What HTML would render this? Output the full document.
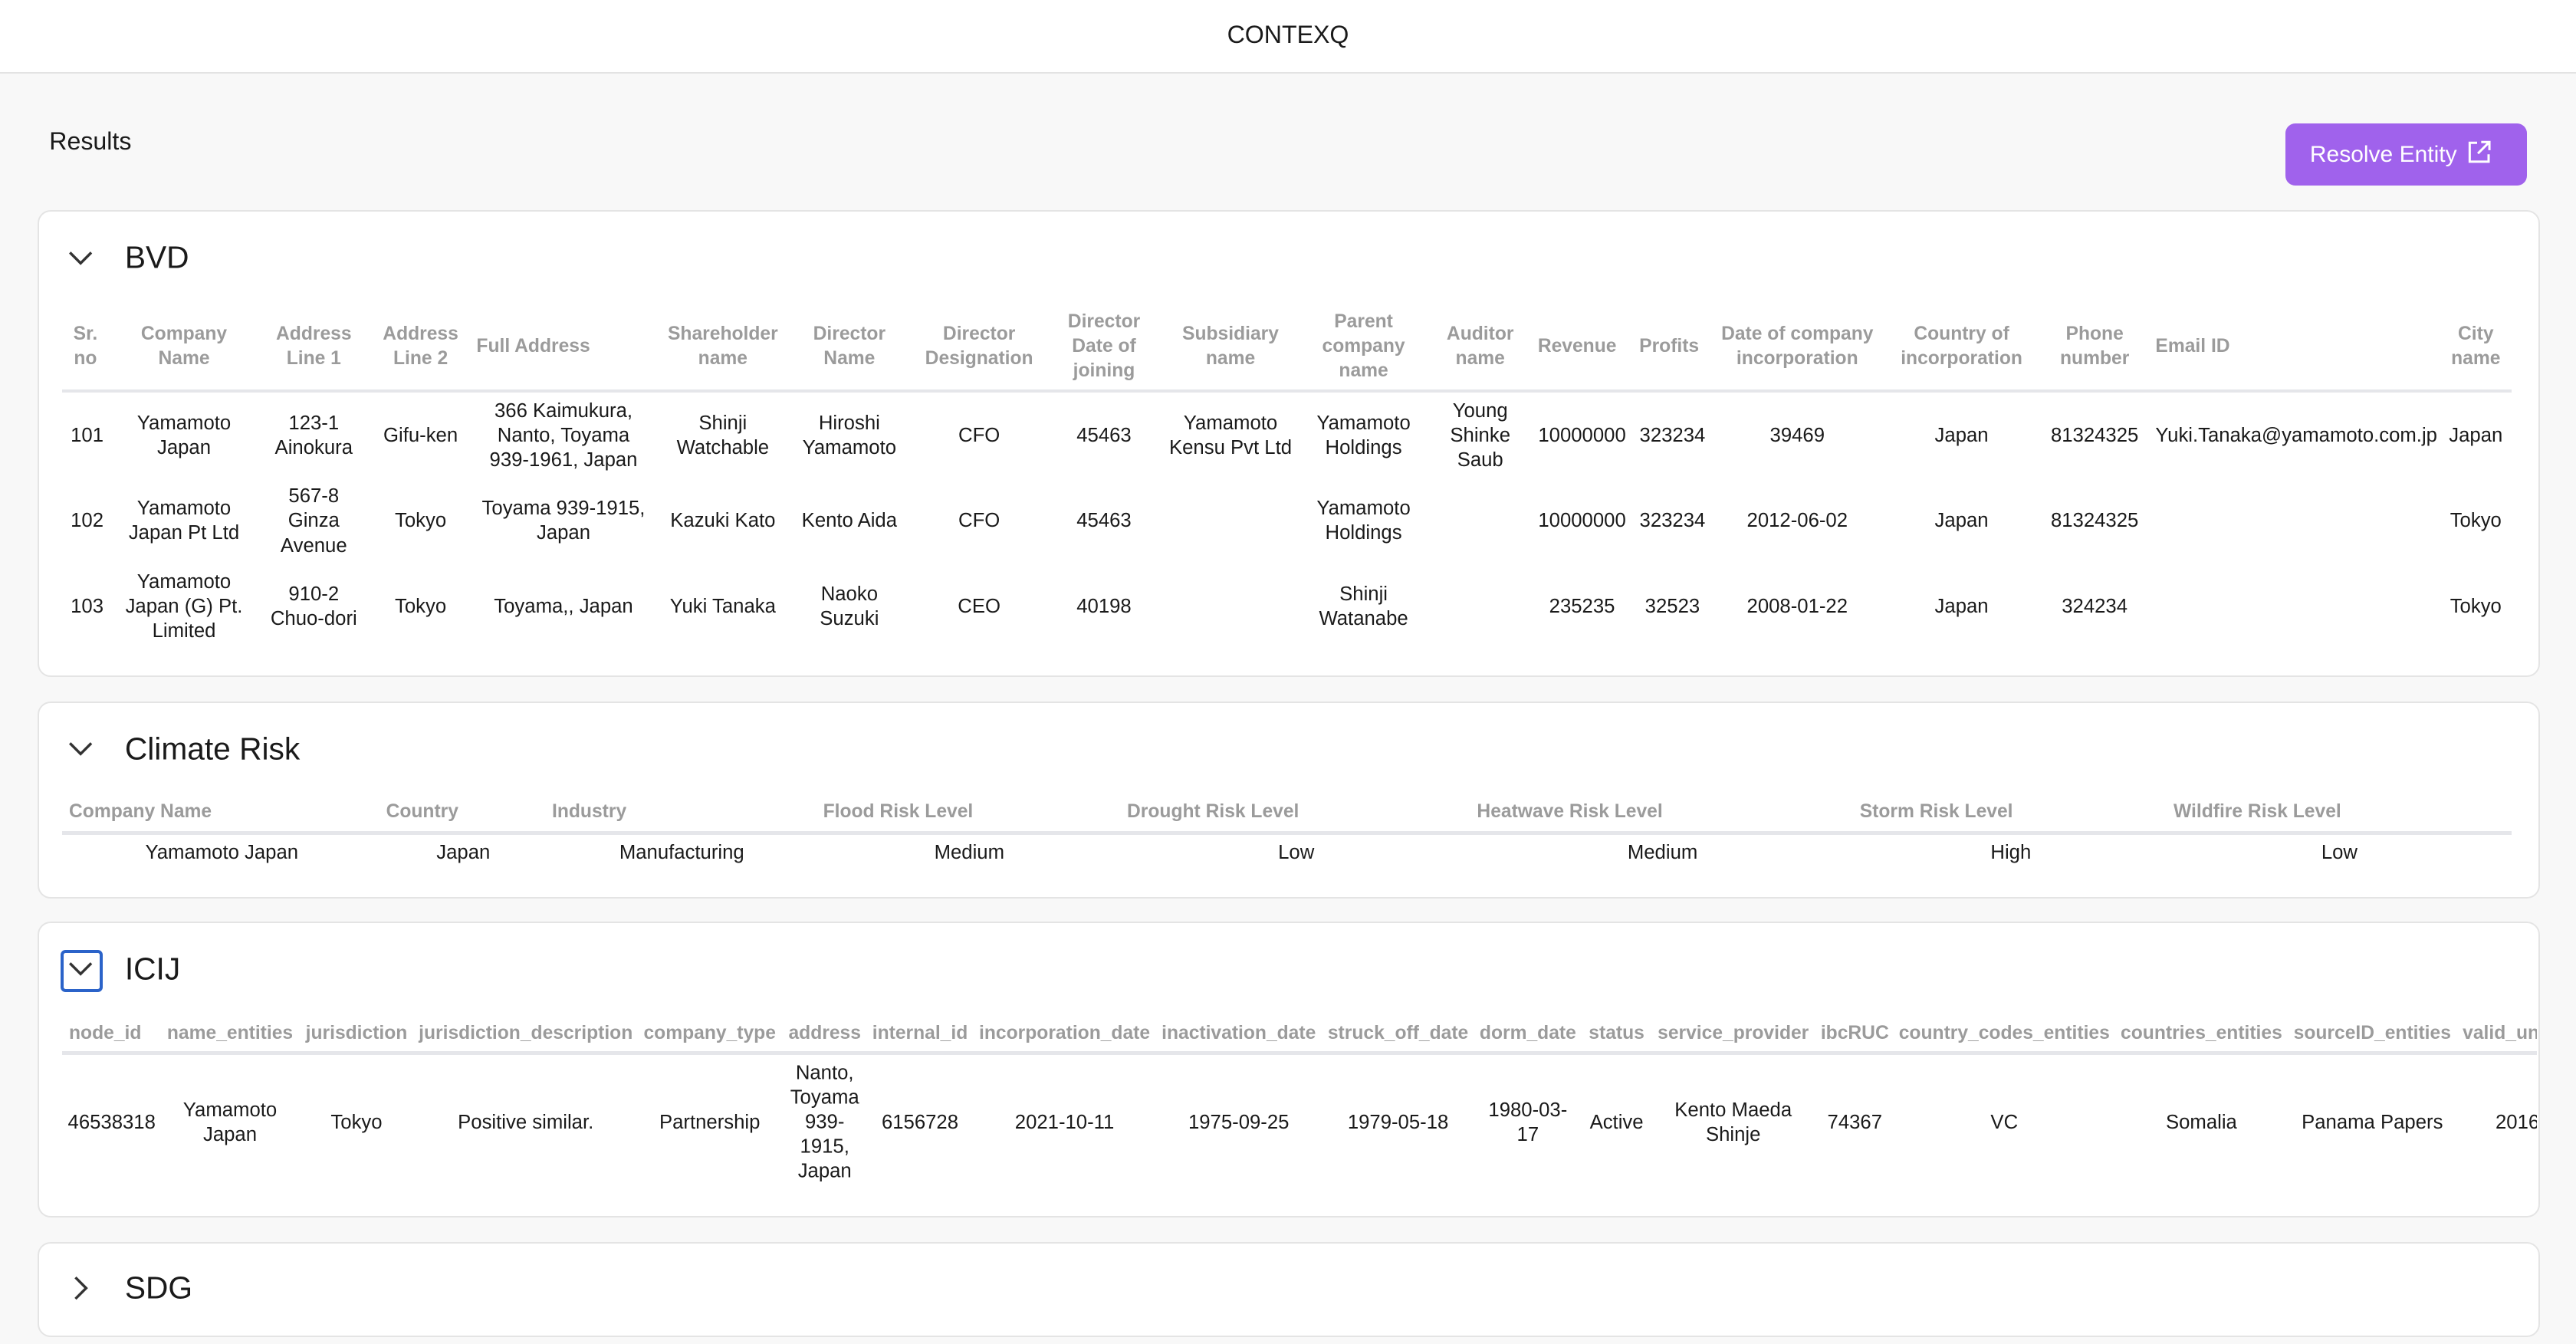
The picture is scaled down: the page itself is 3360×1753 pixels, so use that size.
<!DOCTYPE html>
<html><head><meta charset="utf-8"><style>
html,body{margin:0;padding:0}
body{width:1568px;height:818px;zoom:2.142857;background:#f8f8f8;font-family:"Liberation Sans",Arial,sans-serif;color:#1a1a1a;position:relative;overflow:hidden}
.hdr{position:absolute;left:0;top:0;width:1568px;height:44px;background:#fff;border-bottom:1px solid #e3e3e3}
.c{position:absolute;transform:translate(-50%,-50%);text-align:center;white-space:nowrap;font-size:12px;line-height:15px}
.l{position:absolute;transform:translateY(-50%);white-space:nowrap;font-size:12px;line-height:15px}
.h{color:#9b9b9b;font-weight:bold;font-size:11.5px}
.card{position:absolute;left:23px;width:1521px;background:#fff;border:1px solid #e4e4e4;border-radius:8px;overflow:hidden}
.line{position:absolute;height:2px;background:#e5e6ea}
.title{position:absolute;font-size:19px;transform:translateY(-50%)}
</style></head><body>
<div class="hdr"></div>
<div class="c" style="left:784px;top:21px;font-size:15px">CONTEXQ</div>
<div class="l" style="left:30px;top:86px;font-size:15px">Results</div>
<div style="position:absolute;left:1391px;top:75px;width:147px;height:38px;background:#a062ec;border-radius:6px;color:#fff;font-size:14px;line-height:38px">
<span style="position:absolute;left:15px">Resolve Entity</span>
<svg style="position:absolute;left:110px;top:10px" width="16" height="16" viewBox="0 0 16 16" fill="none" stroke="#fff" stroke-width="1.4"><path d="M7 2H2.5v11.5H14V9"/><path d="M9.5 1.5H14.5V6.5M14.5 1.5L7.5 8.5"/></svg>
</div>

<!-- BVD -->
<div class="card" style="top:128px;height:282px"></div>
<svg style="position:absolute;left:41px;top:151px" width="16" height="12" viewBox="0 0 16 12" fill="none" stroke="#333" stroke-width="1.6"><path d="M1.5 2.5L8 9L14.5 2.5"/></svg>
<div class="title" style="left:76px;top:157px">BVD</div>
<div class="line" style="left:38px;top:237px;width:1491px"></div>
<div class="c h" style="left:52px;top:211px">Sr.<br>no</div>
<div class="c h" style="left:112px;top:211px">Company<br>Name</div>
<div class="c h" style="left:191px;top:211px">Address<br>Line 1</div>
<div class="c h" style="left:256px;top:211px">Address<br>Line 2</div>
<div class="l h" style="left:290px;top:211px">Full Address</div>
<div class="c h" style="left:440px;top:211px">Shareholder<br>name</div>
<div class="c h" style="left:517px;top:211px">Director<br>Name</div>
<div class="c h" style="left:596px;top:211px">Director<br>Designation</div>
<div class="c h" style="left:672px;top:211px">Director<br>Date of<br>joining</div>
<div class="c h" style="left:749px;top:211px">Subsidiary<br>name</div>
<div class="c h" style="left:830px;top:211px">Parent<br>company<br>name</div>
<div class="c h" style="left:901px;top:211px">Auditor<br>name</div>
<div class="c h" style="left:960px;top:211px">Revenue</div>
<div class="c h" style="left:1016px;top:211px">Profits</div>
<div class="c h" style="left:1094px;top:211px">Date of company<br>incorporation</div>
<div class="c h" style="left:1194px;top:211px">Country of<br>incorporation</div>
<div class="c h" style="left:1275px;top:211px">Phone<br>number</div>
<div class="l h" style="left:1312px;top:211px">Email ID</div>
<div class="c h" style="left:1507px;top:211px">City<br>name</div>

<div class="c" style="left:53px;top:265px">101</div>
<div class="c" style="left:112px;top:265px">Yamamoto<br>Japan</div>
<div class="c" style="left:191px;top:265px">123-1<br>Ainokura</div>
<div class="c" style="left:256px;top:265px">Gifu-ken</div>
<div class="c" style="left:343px;top:265px">366 Kaimukura,<br>Nanto, Toyama<br>939-1961, Japan</div>
<div class="c" style="left:440px;top:265px">Shinji<br>Watchable</div>
<div class="c" style="left:517px;top:265px">Hiroshi<br>Yamamoto</div>
<div class="c" style="left:596px;top:265px">CFO</div>
<div class="c" style="left:672px;top:265px">45463</div>
<div class="c" style="left:749px;top:265px">Yamamoto<br>Kensu Pvt Ltd</div>
<div class="c" style="left:830px;top:265px">Yamamoto<br>Holdings</div>
<div class="c" style="left:901px;top:265px">Young<br>Shinke<br>Saub</div>
<div class="c" style="left:963px;top:265px">10000000</div>
<div class="c" style="left:1018px;top:265px">323234</div>
<div class="c" style="left:1094px;top:265px">39469</div>
<div class="c" style="left:1194px;top:265px">Japan</div>
<div class="c" style="left:1275px;top:265px">81324325</div>
<div class="l" style="left:1312px;top:265px">Yuki.Tanaka@yamamoto.com.jp</div>
<div class="c" style="left:1507px;top:265px">Japan</div>

<div class="c" style="left:53px;top:317px">102</div>
<div class="c" style="left:112px;top:317px">Yamamoto<br>Japan Pt Ltd</div>
<div class="c" style="left:191px;top:317px">567-8<br>Ginza<br>Avenue</div>
<div class="c" style="left:256px;top:317px">Tokyo</div>
<div class="c" style="left:343px;top:317px">Toyama 939-1915,<br>Japan</div>
<div class="c" style="left:440px;top:317px">Kazuki Kato</div>
<div class="c" style="left:517px;top:317px">Kento Aida</div>
<div class="c" style="left:596px;top:317px">CFO</div>
<div class="c" style="left:672px;top:317px">45463</div>
<div class="c" style="left:830px;top:317px">Yamamoto<br>Holdings</div>
<div class="c" style="left:963px;top:317px">10000000</div>
<div class="c" style="left:1018px;top:317px">323234</div>
<div class="c" style="left:1094px;top:317px">2012-06-02</div>
<div class="c" style="left:1194px;top:317px">Japan</div>
<div class="c" style="left:1275px;top:317px">81324325</div>
<div class="c" style="left:1507px;top:317px">Tokyo</div>

<div class="c" style="left:53px;top:369px">103</div>
<div class="c" style="left:112px;top:369px">Yamamoto<br>Japan (G) Pt.<br>Limited</div>
<div class="c" style="left:191px;top:369px">910-2<br>Chuo-dori</div>
<div class="c" style="left:256px;top:369px">Tokyo</div>
<div class="c" style="left:343px;top:369px">Toyama,, Japan</div>
<div class="c" style="left:440px;top:369px">Yuki Tanaka</div>
<div class="c" style="left:517px;top:369px">Naoko<br>Suzuki</div>
<div class="c" style="left:596px;top:369px">CEO</div>
<div class="c" style="left:672px;top:369px">40198</div>
<div class="c" style="left:830px;top:369px">Shinji<br>Watanabe</div>
<div class="c" style="left:963px;top:369px">235235</div>
<div class="c" style="left:1018px;top:369px">32523</div>
<div class="c" style="left:1094px;top:369px">2008-01-22</div>
<div class="c" style="left:1194px;top:369px">Japan</div>
<div class="c" style="left:1275px;top:369px">324234</div>
<div class="c" style="left:1507px;top:369px">Tokyo</div>

<!-- Climate -->
<div class="card" style="top:427px;height:118px"></div>
<svg style="position:absolute;left:41px;top:450px" width="16" height="12" viewBox="0 0 16 12" fill="none" stroke="#333" stroke-width="1.6"><path d="M1.5 2.5L8 9L14.5 2.5"/></svg>
<div class="title" style="left:76px;top:456px">Climate Risk</div>
<div class="line" style="left:38px;top:506px;width:1491px"></div>
<div class="l h" style="left:42px;top:494px">Company Name</div>
<div class="l h" style="left:235px;top:494px">Country</div>
<div class="l h" style="left:336px;top:494px">Industry</div>
<div class="l h" style="left:501px;top:494px">Flood Risk Level</div>
<div class="l h" style="left:686px;top:494px">Drought Risk Level</div>
<div class="l h" style="left:899px;top:494px">Heatwave Risk Level</div>
<div class="l h" style="left:1132px;top:494px">Storm Risk Level</div>
<div class="l h" style="left:1323px;top:494px">Wildfire Risk Level</div>
<div class="c" style="left:135px;top:519px">Yamamoto Japan</div>
<div class="c" style="left:282px;top:519px">Japan</div>
<div class="c" style="left:415px;top:519px">Manufacturing</div>
<div class="c" style="left:590px;top:519px">Medium</div>
<div class="c" style="left:789px;top:519px">Low</div>
<div class="c" style="left:1012px;top:519px">Medium</div>
<div class="c" style="left:1224px;top:519px">High</div>
<div class="c" style="left:1424px;top:519px">Low</div>

<!-- ICIJ -->
<div class="card" style="top:561px;height:178px"></div>
<div style="position:absolute;left:37px;top:578px;width:22px;height:22px;border:2px solid #2b63c9;border-radius:3px"></div>
<svg style="position:absolute;left:41px;top:584px" width="16" height="12" viewBox="0 0 16 12" fill="none" stroke="#333" stroke-width="1.6"><path d="M1.5 2.5L8 9L14.5 2.5"/></svg>
<div class="title" style="left:76px;top:590px">ICIJ</div>
<div style="position:absolute;left:24px;top:600px;width:1520px;height:138px;overflow:hidden">
<div style="position:absolute;left:-24px;top:-600px;width:1600px;height:800px">
<div class="line" style="left:38px;top:640px;width:1530px"></div>
<div class="l h" style="left:42px;top:629px">node_id</div>
<div class="c h" style="left:140px;top:629px">name_entities</div>
<div class="c h" style="left:217px;top:629px">jurisdiction</div>
<div class="c h" style="left:320px;top:629px">jurisdiction_description</div>
<div class="c h" style="left:432px;top:629px">company_type</div>
<div class="c h" style="left:502px;top:629px">address</div>
<div class="c h" style="left:560px;top:629px">internal_id</div>
<div class="c h" style="left:648px;top:629px">incorporation_date</div>
<div class="c h" style="left:754px;top:629px">inactivation_date</div>
<div class="c h" style="left:851px;top:629px">struck_off_date</div>
<div class="c h" style="left:930px;top:629px">dorm_date</div>
<div class="c h" style="left:984px;top:629px">status</div>
<div class="c h" style="left:1055px;top:629px">service_provider</div>
<div class="c h" style="left:1129px;top:629px">ibcRUC</div>
<div class="c h" style="left:1220px;top:629px">country_codes_entities</div>
<div class="c h" style="left:1340px;top:629px">countries_entities</div>
<div class="c h" style="left:1444px;top:629px">sourceID_entities</div>
<div class="l h" style="left:1499px;top:629px">valid_until</div>
<div class="c" style="left:68px;top:683px">46538318</div>
<div class="c" style="left:140px;top:683px">Yamamoto<br>Japan</div>
<div class="c" style="left:217px;top:683px">Tokyo</div>
<div class="c" style="left:320px;top:683px">Positive similar.</div>
<div class="c" style="left:432px;top:683px">Partnership</div>
<div class="c" style="left:502px;top:683px">Nanto,<br>Toyama<br>939-<br>1915,<br>Japan</div>
<div class="c" style="left:560px;top:683px">6156728</div>
<div class="c" style="left:648px;top:683px">2021-10-11</div>
<div class="c" style="left:754px;top:683px">1975-09-25</div>
<div class="c" style="left:851px;top:683px">1979-05-18</div>
<div class="c" style="left:930px;top:683px">1980-03-<br>17</div>
<div class="c" style="left:984px;top:683px">Active</div>
<div class="c" style="left:1055px;top:683px">Kento Maeda<br>Shinje</div>
<div class="c" style="left:1129px;top:683px">74367</div>
<div class="c" style="left:1220px;top:683px">VC</div>
<div class="c" style="left:1340px;top:683px">Somalia</div>
<div class="c" style="left:1444px;top:683px">Panama Papers</div>
<div class="l" style="left:1519px;top:683px">2016</div>
</div></div>

<!-- SDG -->
<div class="card" style="top:756px;height:56px"></div>
<svg style="position:absolute;left:43px;top:776px" width="12" height="16" viewBox="0 0 12 16" fill="none" stroke="#333" stroke-width="1.6"><path d="M3 1.5L9.5 8L3 14.5"/></svg>
<div class="title" style="left:76px;top:784px">SDG</div>
</body></html>
